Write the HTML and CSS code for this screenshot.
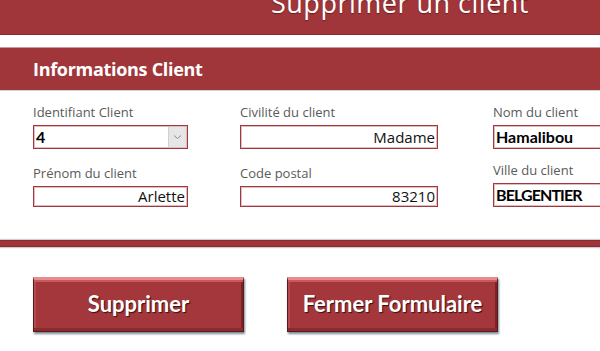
FILE: index.html
```html
<html>
<head>
<title>Supprimer un client</title>
<link rel="stylesheet" href="styles.css">
</head>
<body>

<div class="titlebar">
  <h1>Supprimer un client</h1>
</div>

<div class="section">
  <h2>Informations Client</h2>
</div>

<div class="fields">
  <div class="field">
    <label>Identifiant Client</label>
    <div class="box combo bold">4<span class="arrow"><svg width="9" height="6" viewBox="0 0 9 6"><path d="M1 1.5 L4.5 4.5 L8 1.5" fill="none" stroke="#8a8a8a" stroke-width="1"/></svg></span></div>
  </div>
  <div class="field">
    <label>Civilité du client</label>
    <div class="box wide right">Madame</div>
  </div>
  <div class="field">
    <label>Nom du client</label>
    <div class="box last bold">Hamalibou</div>
  </div>

  <div class="field">
    <label>Prénom du client</label>
    <div class="box short right">Arlette</div>
  </div>
  <div class="field">
    <label>Code postal</label>
    <div class="box short wide right">83210</div>
  </div>
  <div class="field up">
    <label>Ville du client</label>
    <div class="box short tall last bold caps">BELGENTIER</div>
  </div>
</div>

<div class="rule"></div>

<div class="buttons">
  <div class="btn">Supprimer</div>
  <div class="btn">Fermer Formulaire</div>
</div>

</body>
</html>
```

FILE: styles.css
```css
body { margin: 0;
       background: #FFFFFF;
       font-family: "Open Sans", "DejaVu Sans", sans-serif;
       overflow: hidden;
     }
.titlebar { height: 34px;
            background: #a1363a;
            border-bottom: 1px solid #8c2a2e;
            overflow: hidden;
            position: relative;
          }
h1 { margin: 0;
     position: absolute;
     left: 271px; top: -16px;
     font-weight: 400;
     font-size: 27px;
     letter-spacing: 0.5px;
     color: #ffffff;
     white-space: nowrap;
     text-shadow: 0 1px 1px #6b1e20;
   }
.section { margin-top: 12px;
           height: 42px;
           background: #a1363a;
           border-top: 1px solid #c99a9c;
           border-bottom: 1px solid #d9d0d0;
           display: flex;
           align-items: center;
         }
h2 { margin: 0 0 0 33px;
     font-size: 18px;
     font-weight: 700;
     color: #ffffff;
     letter-spacing: -0.3px;
   }
.fields { display: grid;
          grid-template-columns: 207px 253px 1fr;
          row-gap: 15px;
          margin: 12px 0 0 33px;
        }
.field label { display: block;
               font-size: 13px;
               color: #5a5a5a;
               height: 19px;
               line-height: 18px;
               margin-bottom: 3px;
             }
.field.up { margin-top: -3px; }
.box { box-sizing: border-box;
       width: 155px; height: 24px;
       border: 1px solid #a3373b;
       box-shadow: inset 0 0 0 1px #dcc0c1;
       font-size: 15px;
       line-height: 22px;
       padding: 0 2px;
       color: #111;
       white-space: nowrap;
       overflow: hidden;
     }
.box.short { height: 21px; line-height: 19px; }
.box.tall { height: 24px; line-height: 22px; }
.box.wide { width: 198px; }
.box.last { width: 200px; }
.right { text-align: right; }
.bold { font-family: "Lato", "Open Sans", sans-serif;
        font-weight: 700;
        font-size: 16px;
        color: #000;
      }
.caps { letter-spacing: -0.9px; }
.combo { position: relative; }
.arrow { position: absolute;
         right: 1px; top: 1px; bottom: 1px;
         width: 17px;
         background: #e6e6e6;
         border-left: 1px solid #d0d0d0;
         display: flex; align-items: center; justify-content: center;
       }
.rule { margin-top: 33px;
        height: 5px;
        background: #a1363a;
        border-top: 1px solid #8c2a2e;
        border-bottom: 1px solid #8c2a2e;
        box-shadow: 0 1px 1px #c8cfd6, 0 -1px 1px #c8cfd6;
      }
.buttons { display: flex;
           gap: 43px;
           margin: 30px 0 0 33px;
         }
.btn { box-sizing: border-box;
       width: 211px; height: 55px;
       background: #a3373b;
       border: 1px solid #5a1a1c;
       border-top: 3px solid #e88c8f;
       box-shadow: inset 0 2px 0 #c75a5e, inset 0 -3px 0 #8a2b2e, inset -2px 0 0 #7a2426, inset 2px 0 0 #b44a4d, 1px 2px 2px #7d8a96;
       color: #ffffff;
       font-family: "Lato", "Open Sans", sans-serif;
       font-weight: 700;
       font-size: 22px;
       text-align: center;
       line-height: 48px;
       text-shadow: 1px 1px 1px #3a0f10;
     }
```
